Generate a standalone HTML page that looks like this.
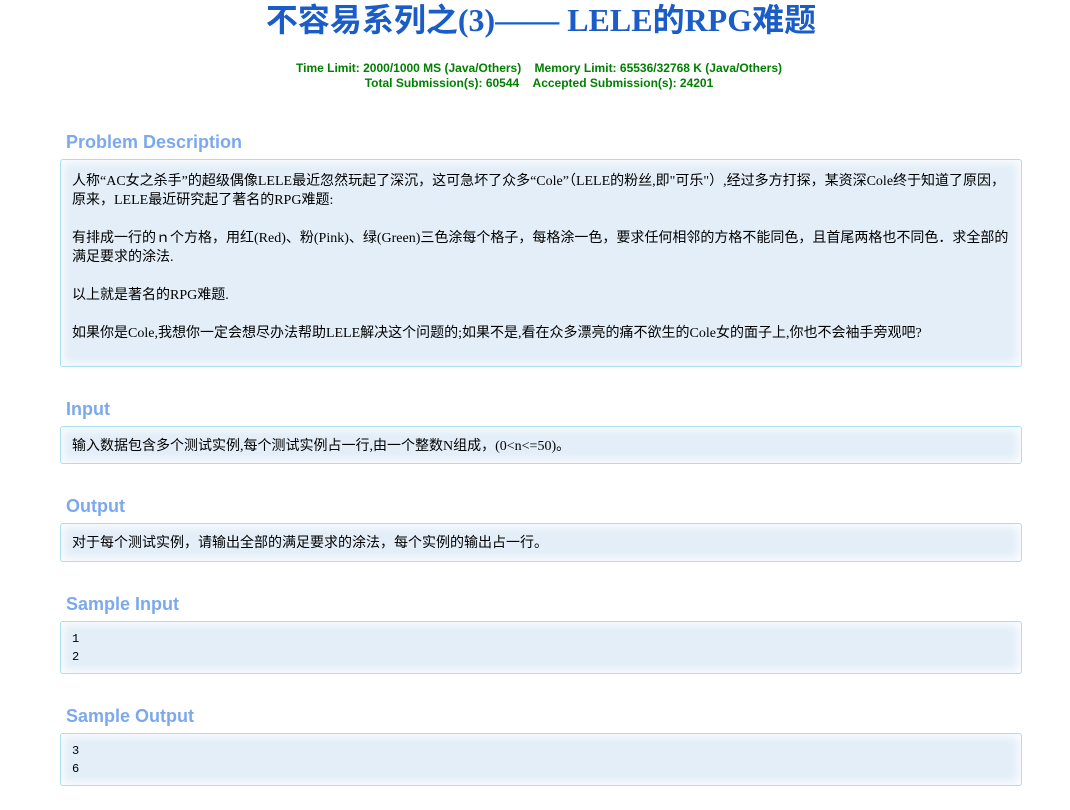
<!DOCTYPE html>
<html><head><meta charset="utf-8"><style>
body{margin:0;width:1070px;height:810px;background:#fff;position:relative;overflow:hidden;font-family:"Liberation Serif","Noto Sans CJK SC",serif;}
.t{position:absolute;left:6px;width:1070px;text-align:center;top:1px;font-size:32px;font-weight:bold;color:#1a5cc8;font-family:"Liberation Serif","Noto Sans CJK SC",serif;line-height:38px;}
.i{position:absolute;left:4px;width:1070px;text-align:center;top:61px;font:bold 12px/15px "Liberation Sans",sans-serif;color:#008000;}
.h{position:absolute;left:66px;font:bold 18px/22px "Liberation Sans",sans-serif;color:#7ca9ed;}
.p{position:absolute;left:60px;width:938px;border:1px solid #a8e0f0;border-radius:3px;background:#e3eef8;box-shadow:inset 0 0 10px 2px #fff;padding:0 11px;font-size:14px;line-height:19px;color:#000;}
.m{font-family:"Liberation Mono",monospace;font-size:12px;line-height:18px;}
</style></head><body>
<div class="t">不容易系列之(3)—— LELE的RPG难题</div>
<div class="i">Time Limit: 2000/1000 MS (Java/Others)&nbsp;&nbsp;&nbsp;&nbsp;Memory Limit: 65536/32768 K (Java/Others)<br>Total Submission(s): 60544&nbsp;&nbsp;&nbsp;&nbsp;Accepted Submission(s): 24201</div>
<div class="h" style="top:131px">Problem Description</div>
<div class="p" style="top:159px;height:181px;padding-top:12px;padding-bottom:13px">人称“AC女之杀手”的超级偶像LELE最近忽然玩起了深沉，这可急坏了众多“Cole”（LELE的粉丝,即"可乐"）,经过多方打探，某资深Cole终于知道了原因，原来，LELE最近研究起了著名的RPG难题:<br><br>有排成一行的ｎ个方格，用红(Red)、粉(Pink)、绿(Green)三色涂每个格子，每格涂一色，要求任何相邻的方格不能同色，且首尾两格也不同色．求全部的满足要求的涂法.<br><br>以上就是著名的RPG难题.<br><br>如果你是Cole,我想你一定会想尽办法帮助LELE解决这个问题的;如果不是,看在众多漂亮的痛不欲生的Cole女的面子上,你也不会袖手旁观吧?</div>
<div class="h" style="top:398px">Input</div>
<div class="p" style="top:426px;height:19px;padding-top:10px;padding-bottom:7px">输入数据包含多个测试实例,每个测试实例占一行,由一个整数N组成，(0&lt;n&lt;=50)。</div>
<div class="h" style="top:495px">Output</div>
<div class="p" style="top:523px;height:19px;padding-top:10px;padding-bottom:8px">对于每个测试实例，请输出全部的满足要求的涂法，每个实例的输出占一行。</div>
<div class="h" style="top:593px">Sample Input</div>
<div class="p m" style="top:621px;height:36px;padding-top:8px;padding-bottom:7px">1<br>2</div>
<div class="h" style="top:705px">Sample Output</div>
<div class="p m" style="top:733px;height:36px;padding-top:8px;padding-bottom:7px">3<br>6</div>
</body></html>
